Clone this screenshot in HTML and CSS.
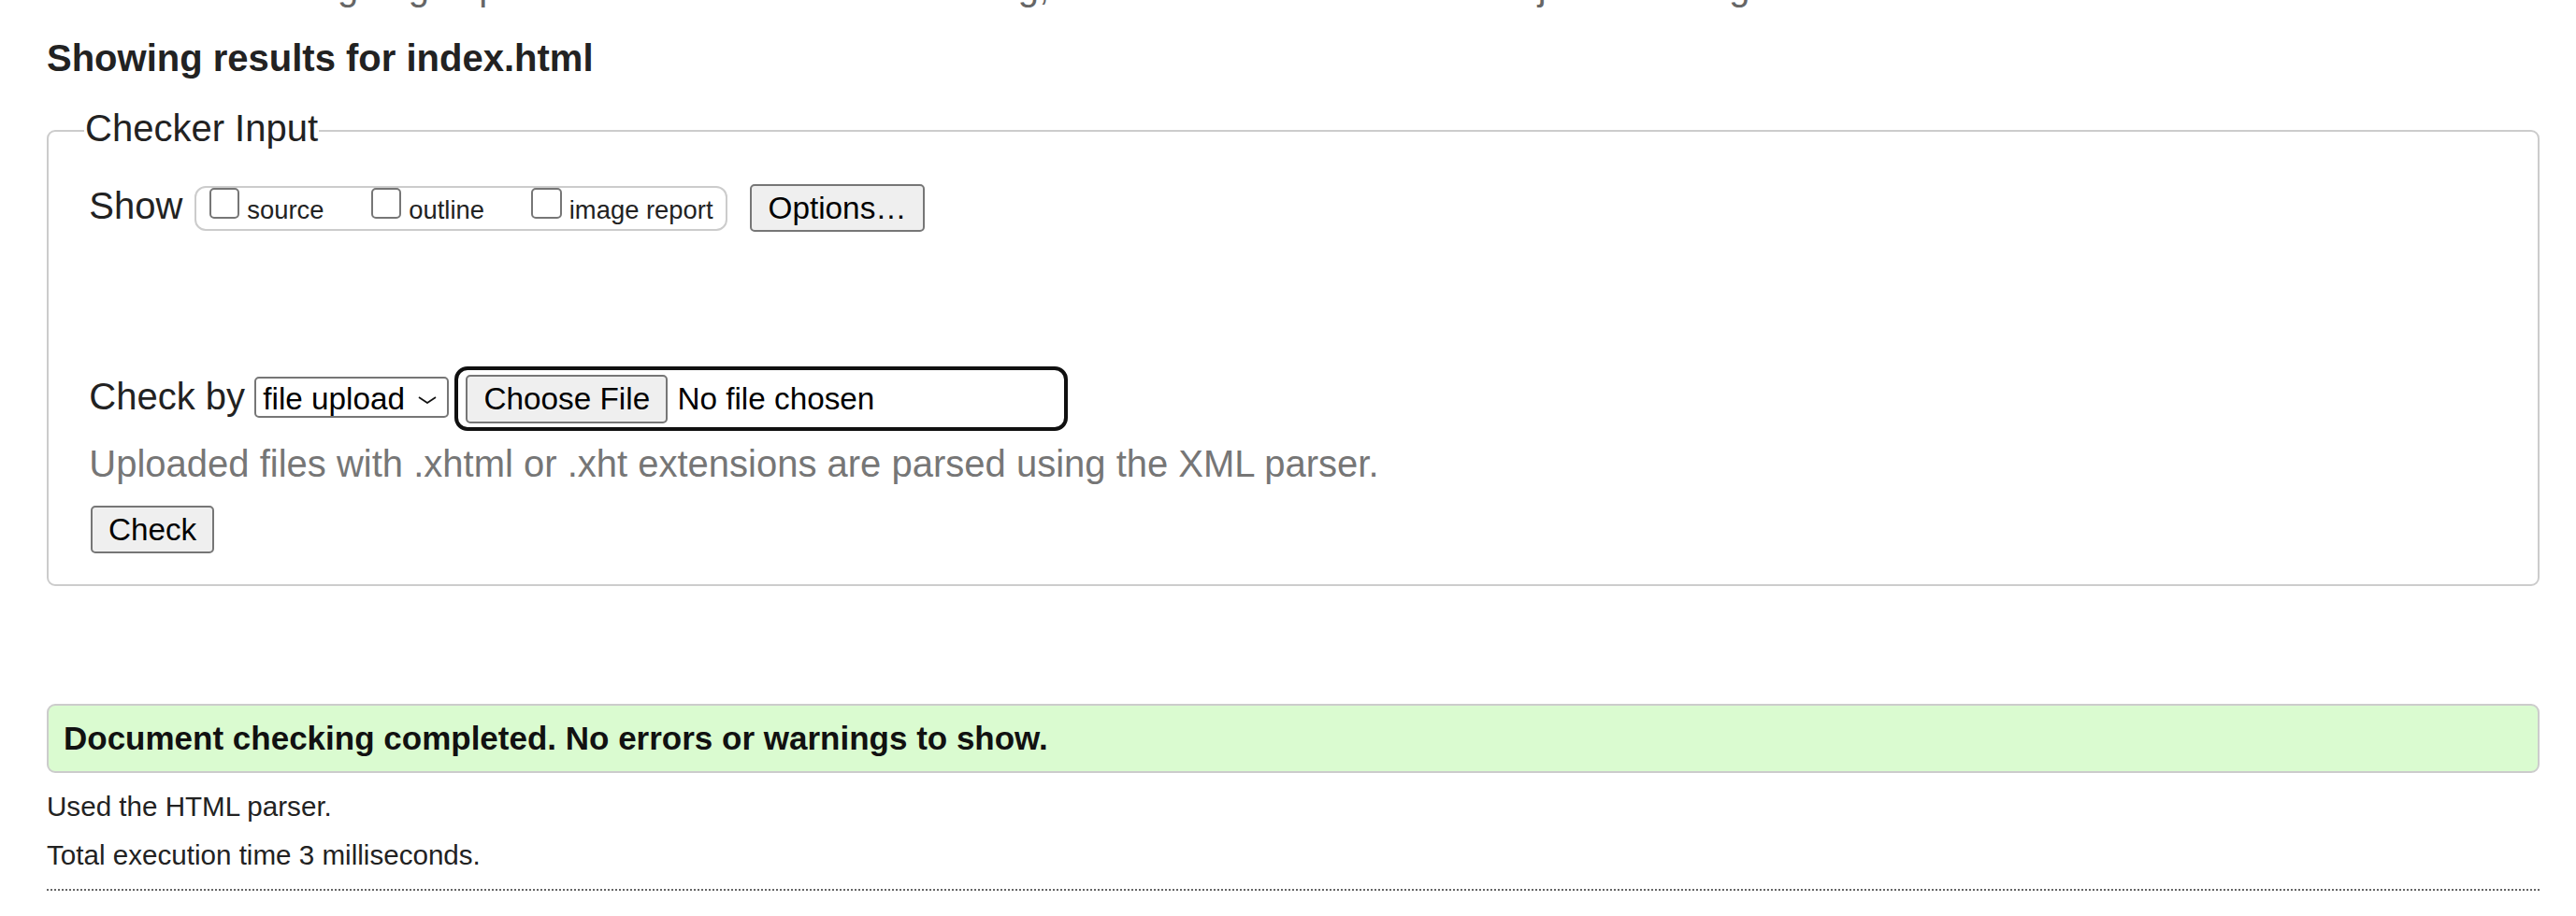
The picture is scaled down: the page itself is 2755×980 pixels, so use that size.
FILE: index.html
```html
<!DOCTYPE html>
<html lang="en">
<head>
<meta charset="utf-8">
<title>Showing results for index.html - Nu Html Checker</title>
<link rel="stylesheet" href="styles.css">
</head>
<body>
<p class="intro">This tool is an ongoing experiment in better HTML checking, and its behavior remains subject to change</p>
<h2 class="results-title">Showing results for index.html</h2>
<form class="checker" action="#">
  <fieldset class="checker-input">
    <legend class="checker-legend">Checker Input</legend>
    <div class="show-row">
      <span class="row-label">Show</span>
      <div class="show-group">
        <label class="show-option"><input type="checkbox" class="check"><span class="option-text">source</span></label>
        <label class="show-option"><input type="checkbox" class="check"><span class="option-text">outline</span></label>
        <label class="show-option"><input type="checkbox" class="check"><span class="option-text">image report</span></label>
      </div>
      <button type="button" class="btn btn-options">Options…</button>
    </div>
    <div class="checkby-row">
      <span class="row-label">Check by</span>
      <div class="select-box">
        <select class="select">
          <option>file upload</option>
          <option>address</option>
          <option>text input</option>
        </select>
        <svg class="chevron" width="20" height="8" viewBox="0 0 20 8" aria-hidden="true"><polyline points="1,1 10,7 19,1" fill="none" stroke="#111" stroke-width="1.8"/></svg>
      </div>
      <div class="file-field">
        <span class="btn btn-file">Choose File</span>
        <span class="file-name">No file chosen</span>
      </div>
    </div>
    <p class="hint">Uploaded files with .xhtml or .xht extensions are parsed using the XML parser.</p>
    <button type="button" class="btn btn-check">Check</button>
  </fieldset>
</form>
<p class="success">Document checking completed. No errors or warnings to show.</p>
<p class="meta">Used the HTML parser.</p>
<p class="meta">Total execution time 3 milliseconds.</p>
<hr class="divider">
</body>
</html>
```
FILE: styles.css
```css
html, body {
  background: #fff;
}
body {
  margin: 0;
  padding: 0 39px 0 50px;
  font-family: "Liberation Sans", Arial, sans-serif;
  color: #222;
}

.intro {
  margin: -36.9px 0 0 8.7px;
  font-size: 40px;
  line-height: 46px;
  color: #666;
  white-space: nowrap;
}

.results-title {
  margin: 30px 0 0;
  font-size: 40px;
  line-height: 46px;
  font-weight: bold;
  color: #222;
}

.checker {
  margin: 0;
}

.checker-input {
  margin: 28.7px 0 0;
  padding: 30.56px 0 32.4px 43.3px;
  border: 2px solid #cccccc;
  border-radius: 9px;
  min-width: 0;
}

.checker-legend {
  margin-left: -5.3px;
  padding: 0 1px 6.3px;
  font-size: 40px;
  line-height: 46px;
  color: #222;
}

.row-label {
  font-size: 40px;
  line-height: 46px;
  color: #222;
  white-space: nowrap;
}

.show-row {
  display: flex;
  align-items: baseline;
}

.show-group {
  box-sizing: border-box;
  height: 48px;
  margin-left: 12.4px;
  padding: 0 13.5px 0 14px;
  border: 2px solid #cccccc;
  border-radius: 12px;
  display: flex;
  align-items: baseline;
  gap: 50.3px;
}

.show-option {
  display: flex;
  align-items: baseline;
}

.check {
  -webkit-appearance: none;
  appearance: none;
  box-sizing: border-box;
  flex: none;
  width: 32.5px;
  height: 32.5px;
  margin: 0 8px 0 0;
  border: 2.5px solid #767676;
  border-radius: 5px;
  background: #fff;
}

.option-text {
  font-size: 27.4px;
  line-height: 32px;
  color: #222;
  white-space: nowrap;
}

.btn {
  box-sizing: border-box;
  display: inline-flex;
  align-items: center;
  height: 51.6px;
  margin: 0;
  padding: 0 17.2px;
  border: 2.5px solid #767676;
  border-radius: 5px;
  background: #efefef;
  color: #000;
  font-family: "Liberation Sans", Arial, sans-serif;
  font-size: 33.3px;
  line-height: normal;
  white-space: nowrap;
}

.btn-options {
  margin-left: 24.3px;
}

.checkby-row {
  display: flex;
  align-items: baseline;
  margin-top: 143.4px;
}

.select-box {
  box-sizing: border-box;
  display: flex;
  align-items: center;
  width: 208px;
  height: 44px;
  margin-left: 9.6px;
  padding: 2.4px 10.3px 0 7.6px;
  border: 2.5px solid #767676;
  border-radius: 5px;
  background: #fff;
}

.select {
  -webkit-appearance: none;
  appearance: none;
  flex: 1;
  min-width: 0;
  margin: 0;
  padding: 0;
  border: 0;
  background: transparent;
  color: #000;
  font-family: "Liberation Sans", Arial, sans-serif;
  font-size: 33.3px;
  line-height: normal;
  outline: none;
}

.chevron {
  flex: none;
  margin-top: 2px;
}

.file-field {
  box-sizing: border-box;
  display: flex;
  align-items: baseline;
  width: 656px;
  height: 69px;
  margin-left: 6.2px;
  padding: 5.4px 0 0 8.5px;
  border: 4.6px solid #101010;
  border-radius: 14px;
}

.file-name {
  margin-left: 10px;
  font-size: 33.3px;
  color: #000;
  white-space: nowrap;
}

.hint {
  margin: 12.44px 0 0;
  font-size: 40px;
  line-height: 46px;
  color: #767676;
  white-space: nowrap;
}

.btn-check {
  display: flex;
  margin-top: 21.56px;
  margin-left: 1.4px;
}

.success {
  margin: 126.3px 0 0;
  padding: 14.17px 16px 13.83px;
  border: 2px solid #cccccc;
  border-radius: 9px;
  background: #dafbd0;
  font-size: 35px;
  line-height: 42px;
  font-weight: bold;
  color: #111;
}

.meta {
  margin: 18.5px 0 0;
  font-size: 29.6px;
  line-height: 34px;
  color: #222;
}

.divider {
  height: 0;
  margin: 19.4px 0 0;
  border: 0;
  border-top: 2px dotted #666;
}
```
